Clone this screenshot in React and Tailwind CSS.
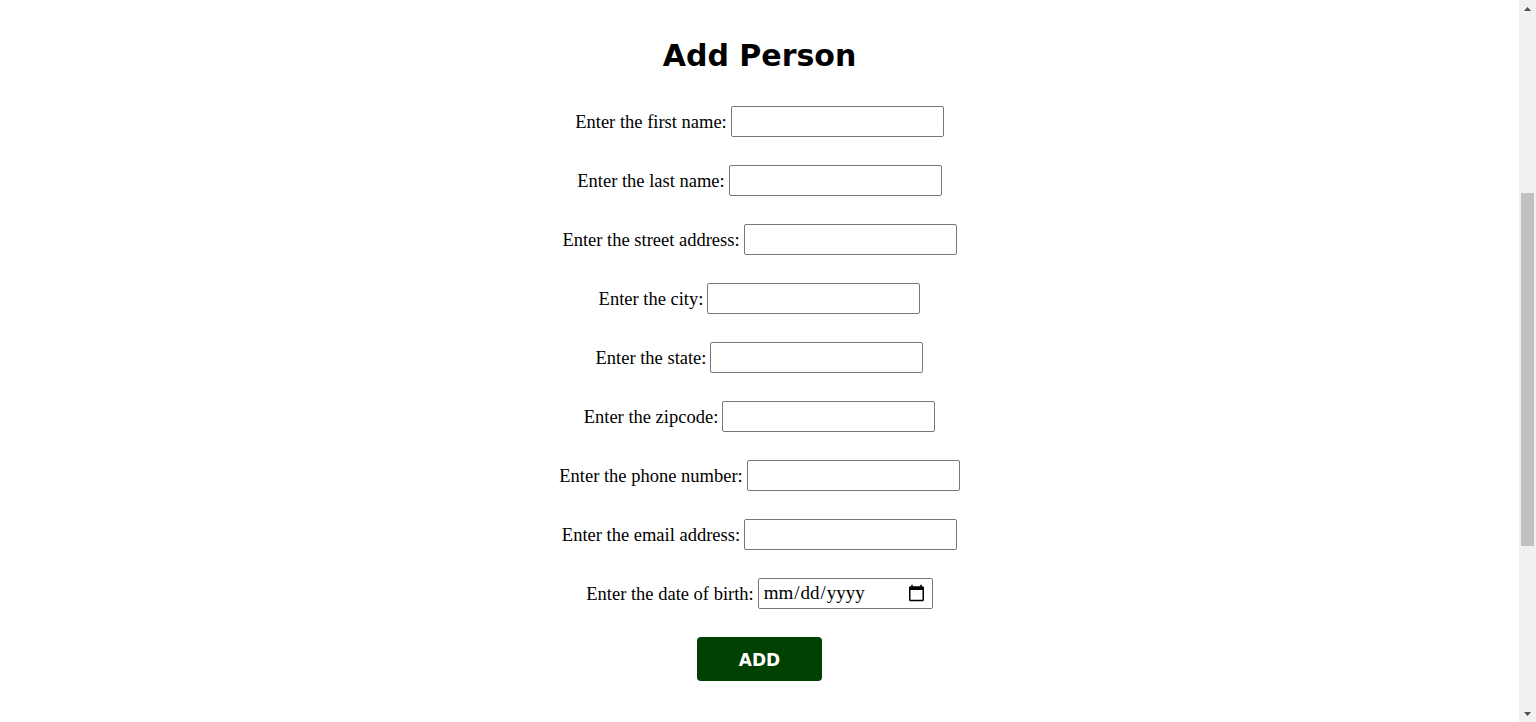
import React, { useState } from "react";

const fields = [
  { name: "firstName", label: "Enter the first name:" },
  { name: "lastName", label: "Enter the last name:" },
  { name: "street", label: "Enter the street address:" },
  { name: "city", label: "Enter the city:" },
  { name: "state", label: "Enter the state:" },
  { name: "zipcode", label: "Enter the zipcode:" },
  { name: "phone", label: "Enter the phone number:" },
  { name: "email", label: "Enter the email address:" },
];

// the browser's scrollbar, as it shows in the picture
const ScrollStrip = () => (
  <div className="flex h-screen w-[17px] shrink-0 flex-col bg-[#f1f1f1]">
    <div className="flex h-[17px] items-center justify-center">
      <svg width="7" height="4" viewBox="0 0 7 4">
        <polygon points="3.5,0 7,4 0,4" fill="#505050" />
      </svg>
    </div>
    <div className="h-[176px]" />
    <div className="mx-[2px] h-[353px] bg-[#c1c1c1]" />
    <div className="flex-1" />
    <div className="flex h-[17px] items-center justify-center">
      <svg width="7" height="4" viewBox="0 0 7 4">
        <polygon points="0,0 7,0 3.5,4" fill="#505050" />
      </svg>
    </div>
  </div>
);

const AddPerson = () => {
  const [form, setForm] = useState({});

  const handleChange = (e) => {
    setForm({ ...form, [e.target.name]: e.target.value });
  };

  return (
    <div className="flex h-screen overflow-hidden bg-white text-black">
      <div className="flex flex-1 flex-col items-center pt-[38px]">
        <h1 className="font-['DejaVu_Sans',sans-serif] text-[30px] font-bold leading-[36px]">
          Add Person
        </h1>

        <form
          className="mt-[32px] flex flex-col items-center gap-[28px] font-['Liberation_Serif',serif] text-[18.5px]"
          onSubmit={(e) => e.preventDefault()}
        >
          {fields.map((field) => (
            <div
              key={field.name}
              className="flex h-[31px] items-center justify-center gap-[4px]"
            >
              <label htmlFor={field.name} className="pt-[2px]">
                {field.label}
              </label>
              <input
                id={field.name}
                name={field.name}
                type="text"
                value={form[field.name] || ""}
                onChange={handleChange}
                className="h-[31px] w-[213px] rounded-[2px] border border-[#767676] bg-white px-[2px]"
              />
            </div>
          ))}

          <div className="flex h-[31px] items-center justify-center gap-[4px]">
            <label htmlFor="dob" className="pt-[2px]">
              Enter the date of birth:
            </label>
            <input
              id="dob"
              name="dob"
              type="date"
              value={form.dob || ""}
              onChange={handleChange}
              className="h-[31px] w-[175px] rounded-[2px] border border-[#767676] bg-white px-[4px] text-[19px]"
            />
          </div>

          <button
            type="submit"
            className="h-[44px] w-[125px] rounded-[4px] bg-[#004000] pt-[4px] font-['DejaVu_Sans',sans-serif] text-[17px] font-bold text-white"
          >
            ADD
          </button>
        </form>
      </div>

      <ScrollStrip />
    </div>
  );
};

export default AddPerson;
